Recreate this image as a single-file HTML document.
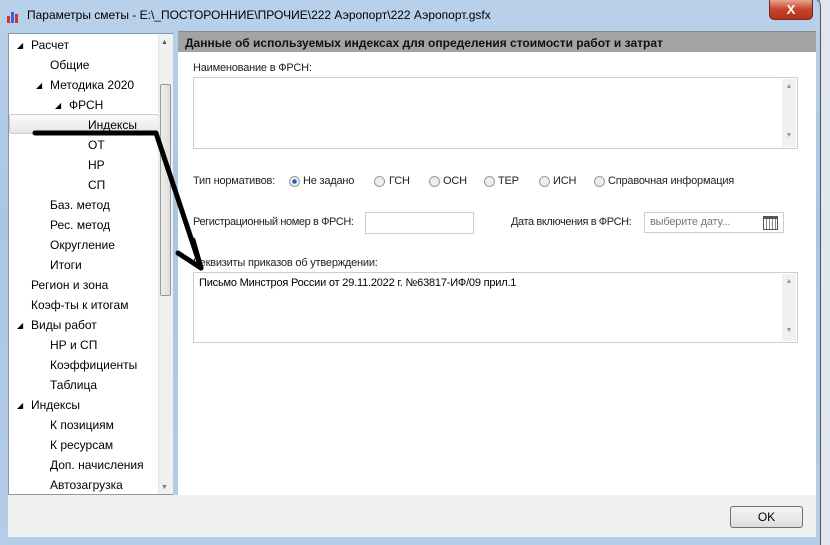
<!DOCTYPE html>
<html><head><meta charset="utf-8"><style>
*{margin:0;padding:0;box-sizing:border-box}
body{width:830px;height:545px;overflow:hidden;position:relative;background:#6e8fb0;font-family:"Liberation Sans","DejaVu Sans",sans-serif;}
.a{position:absolute}
.frame{left:0;top:0;width:821px;height:545px;background:linear-gradient(#b9d1ea,#a9c6e4 40%,#b4cde8);border-right:1px solid #555;border-radius:0 6px 0 0}
.title{left:27px;top:8px;font-size:12px;color:#000}
.tree{left:8px;top:33px;width:165px;height:462px;background:#fff;border:1px solid #8a99aa;font-size:12px}
.tree div{position:absolute;white-space:nowrap;color:#000}
.tri{font-size:8px;color:#444}
.main{left:178px;top:31px;width:638px;height:464px;background:#fff}
.hdr{left:0;top:0;width:638px;height:21px;background:#a3a3a3;font-size:12px;font-weight:bold;padding:4px 0 0 7px;color:#111;border-top:1px solid #888}
.lbl{font-size:11px;color:#222;white-space:nowrap;letter-spacing:-0.2px}
.box{border:1px solid #c9ced5;background:#fff}
.sb{position:absolute;right:1px;top:1px;bottom:1px;width:14px;background:#f0f0f0;font-size:7px;color:#999;text-align:center}
.rad{position:absolute;width:11px;height:11px;border-radius:50%;border:1px solid #999;background:#eee}
.bottom{left:8px;top:495px;width:808px;height:42px;background:#f0f0f0}
</style></head><body>
<div class="a" style="left:820px;top:0;width:10px;height:545px;background:#dfe6ee"></div>
<div class="a frame"></div>
<div class="a" style="left:7px;top:10px;width:14px;height:13px">
<div class="a" style="left:0;top:6px;width:3px;height:7px;background:#c33"></div>
<div class="a" style="left:4px;top:2px;width:3px;height:11px;background:#36c"></div>
<div class="a" style="left:8px;top:4px;width:3px;height:9px;background:#c33"></div></div>
<div class="a title">Параметры сметы - E:\_ПОСТОРОННИЕ\ПРОЧИЕ\222 Аэропорт\222 Аэропорт.gsfx</div>
<div class="a" style="left:769px;top:0;width:44px;height:20px;background:linear-gradient(#e8a393,#c7432d 50%,#b23318);border:1px solid #6b2a20;border-top:none;border-radius:0 0 5px 5px;color:#fff;font-weight:bold;font-size:13px;text-align:center;line-height:19px">X</div>
<div class="a tree">
<div style="left:0;top:80px;width:150px;height:20px;background:linear-gradient(#fafafa,#e6e6e6);border:1px solid #ccc;border-radius:3px"></div>
<div class="tri" style="left:8px;top:7px">◢</div><div style="left:22px;top:4px">Расчет</div>
<div style="left:41px;top:24px">Общие</div>
<div class="tri" style="left:27px;top:47px">◢</div><div style="left:41px;top:44px">Методика 2020</div>
<div class="tri" style="left:46px;top:67px">◢</div><div style="left:60px;top:64px">ФРСН</div>
<div style="left:79px;top:84px">Индексы</div>
<div style="left:79px;top:104px">ОТ</div>
<div style="left:79px;top:124px">НР</div>
<div style="left:79px;top:144px">СП</div>
<div style="left:41px;top:164px">Баз. метод</div>
<div style="left:41px;top:184px">Рес. метод</div>
<div style="left:41px;top:204px">Округление</div>
<div style="left:41px;top:224px">Итоги</div>
<div style="left:22px;top:244px">Регион и зона</div>
<div style="left:22px;top:264px">Коэф-ты к итогам</div>
<div class="tri" style="left:8px;top:287px">◢</div><div style="left:22px;top:284px">Виды работ</div>
<div style="left:41px;top:304px">НР и СП</div>
<div style="left:41px;top:324px">Коэффициенты</div>
<div style="left:41px;top:344px">Таблица</div>
<div class="tri" style="left:8px;top:367px">◢</div><div style="left:22px;top:364px">Индексы</div>
<div style="left:41px;top:384px">К позициям</div>
<div style="left:41px;top:404px">К ресурсам</div>
<div style="left:41px;top:424px">Доп. начисления</div>
<div style="left:41px;top:444px">Автозагрузка</div>
<div style="left:149px;top:0;width:15px;height:460px;background:#f0f0f0;border-left:1px solid #e4e4e4"></div>
<div style="left:151px;top:50px;width:11px;height:212px;background:linear-gradient(90deg,#eee,#ddd);border:1px solid #999;border-radius:2px"></div>
<div style="left:152px;top:5px;font-size:7px;color:#555">▲</div>
<div style="left:152px;top:450px;font-size:7px;color:#777">▼</div>
</div>
<div class="a main">
<div class="a hdr">Данные об используемых индексах для определения стоимости работ и затрат</div>
<div class="a lbl" style="left:15px;top:31px">Наименование в ФРСН:</div>
<div class="a box" style="left:15px;top:46px;width:605px;height:72px"><div class="sb"><div style="margin-top:4px">▲</div><div style="margin-top:42px">▼</div></div></div>
<div class="a lbl" style="left:15px;top:144px">Тип нормативов:</div>
<span class="rad" style="left:111px;top:145px;background:radial-gradient(#1a5fc0 30%,#eee 40%)"></span><span class="a lbl" style="left:125px;top:144px">Не задано</span>
<span class="rad" style="left:196px;top:145px"></span><span class="a lbl" style="left:211px;top:144px">ГСН</span>
<span class="rad" style="left:251px;top:145px"></span><span class="a lbl" style="left:265px;top:144px">ОСН</span>
<span class="rad" style="left:306px;top:145px"></span><span class="a lbl" style="left:320px;top:144px">ТЕР</span>
<span class="rad" style="left:361px;top:145px"></span><span class="a lbl" style="left:375px;top:144px">ИСН</span>
<span class="rad" style="left:416px;top:145px"></span><span class="a lbl" style="left:430px;top:144px">Справочная информация</span>
<div class="a lbl" style="left:15px;top:185px;letter-spacing:-0.4px">Регистрационный номер в ФРСН:</div>
<div class="a box" style="left:187px;top:181px;width:109px;height:22px"></div>
<div class="a lbl" style="left:333px;top:185px;letter-spacing:-0.4px">Дата включения в ФРСН:</div>
<div class="a box" style="left:466px;top:181px;width:140px;height:21px"><span class="lbl" style="position:absolute;left:5px;top:3px;color:#777">выберите дату...</span>
<div class="a" style="left:118px;top:3px;width:15px;height:14px;border:1px solid #555;border-top-width:3px;background:repeating-linear-gradient(90deg,#fff 0 2px,#888 2px 3px)"></div></div>
<div class="a lbl" style="left:15px;top:226px">Реквизиты приказов об утверждении:</div>
<div class="a box" style="left:15px;top:241px;width:605px;height:71px"><span class="lbl" style="position:absolute;left:5px;top:4px;color:#000">Письмо Минстроя России от 29.11.2022 г. №63817-ИФ/09 прил.1</span><div class="sb"><div style="margin-top:4px">▲</div><div style="margin-top:42px">▼</div></div></div>
</div>
<div class="a bottom"></div>
<div class="a" style="left:730px;top:506px;width:73px;height:22px;border:1px solid #707070;border-radius:3px;background:linear-gradient(#f2f2f2,#ebebeb 50%,#dcdcdc);font-size:12px;text-align:center;line-height:20px">OK</div>
<svg class="a" style="left:0;top:0" width="830" height="545"><polyline points="35,133 156,133 201,268" fill="none" stroke="#000" stroke-width="5" stroke-linecap="round" stroke-linejoin="round"/><polyline points="178,253 201,268 193,240" fill="none" stroke="#000" stroke-width="5" stroke-linecap="round" stroke-linejoin="round"/></svg>
</body></html>
